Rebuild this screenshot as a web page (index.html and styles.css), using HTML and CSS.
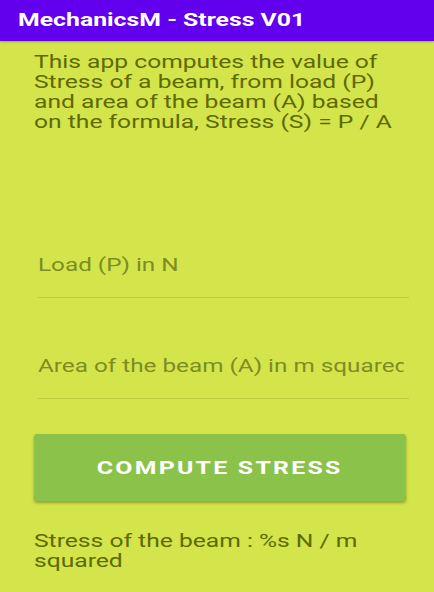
FILE: index.html
```html
<!DOCTYPE html>
<html lang="en">
  <head>
    <meta charset="UTF-8" />
    <meta name="viewport" content="width=device-width, initial-scale=1.0" />
    <title>MechanicsM - Stress V01</title>
    <link rel="stylesheet" href="styles.css">
  </head>
  <body>
    <div class="toolbar"><span class="wide">MechanicsM - Stress V01</span></div>

    <div class="content">
      <p class="intro wide">This app computes the value of Stress of a beam, from load (P) and area of the beam (A) based on the formula, Stress (S) = P / A</p>

      <div class="field field-first">
        <input class="wide" type="text" placeholder="Load (P) in N" />
      </div>
      <div class="field">
        <input class="wide" type="text" placeholder="Area of the beam (A) in m squared" />
      </div>

      <button class="compute"><span class="wide">COMPUTE STRESS</span></button>

      <p class="result wide">Stress of the beam : %s N / m squared</p>
    </div>
  </body>
</html>
```

FILE: styles.css
```css
* {
  box-sizing: border-box;
}

html {
  background-color: #d4e44b;
}

body {
  margin: 0;
  padding: 0;
  width: 434px;
  height: 592px;
  overflow: hidden;
  font-family: Roboto, "Noto Sans", sans-serif;
  background-color: #d4e44b;
}

.wide {
  display: inline-block;
  transform: scaleX(1.4);
  transform-origin: left center;
}

.toolbar {
  height: 41px;
  background-color: #6200ee;
  color: #fff;
  font-size: 18.5px;
  font-weight: bold;
  padding: 9px 0 0 18px;
  box-shadow: 0 1px 2px rgba(0, 0, 0, 0.25);
}

.toolbar .wide {
  transform: scaleX(1.34);
}

.content {
  padding: 0 28px 0 34px;
  display: flex;
  flex-direction: column;
}

.intro {
  margin: 11px 0 0 0;
  width: 262px;
  font-size: 17.6px;
  line-height: 20px;
  color: #5d6a00;
}

.field {
  margin: 0 -3px 0 4px;
  border-bottom: 1.5px solid #bccc3c;
  height: 48px;
  display: flex;
  align-items: center;
  overflow: hidden;
}

.field-first {
  margin-top: 118px;
}

.field + .field {
  margin-top: 53px;
}

.field input {
  width: 265px;
  flex: none;
  border: none;
  outline: none;
  background: transparent;
  padding: 0;
  font-family: Roboto, "Noto Sans", sans-serif;
  font-size: 17.6px;
  color: #5d6a00;
  margin-top: -17px;
  transform: scaleX(1.38);
}

.field input::placeholder {
  color: #7d8d22;
}

.compute {
  margin: 35px 0 0 0;
  height: 67px;
  border: none;
  border-radius: 3px;
  background-color: #8bc34a;
  color: #fff;
  font-family: Roboto, "Noto Sans", sans-serif;
  font-size: 18.5px;
  font-weight: bold;
  letter-spacing: 1.7px;
  box-shadow: 0 2px 3px rgba(0, 0, 0, 0.3);
}

.compute .wide {
  transform: scaleX(1.34);
  transform-origin: center center;
}

.result {
  margin: 30px 0 0 0;
  width: 262px;
  font-size: 17.6px;
  line-height: 20px;
  color: #5d6a00;
}
```
